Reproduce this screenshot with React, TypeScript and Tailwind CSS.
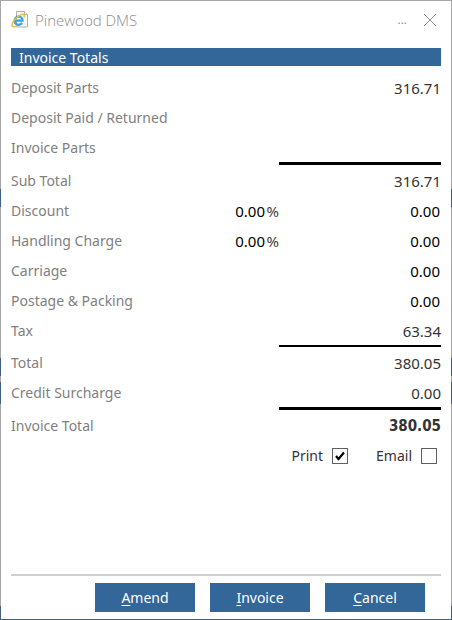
import React, { useState } from 'react'

type Row = {
  id: string;
  label: string;
  value: string;
  percent?: string;
  editable?: boolean;
  bold?: boolean;
  rule?: string;
};

const rows: Row[] = [
  { id: 'deposit-parts', label: 'Deposit Parts', value: '316.71' },
  { id: 'deposit-paid', label: 'Deposit Paid / Returned', value: '' },
  { id: 'invoice-parts', label: 'Invoice Parts', value: '' },
  { id: 'sub-total', label: 'Sub Total', value: '316.71', rule: 'h-[3px]' },
  { id: 'discount', label: 'Discount', value: '0.00', percent: '0.00', editable: true },
  { id: 'handling', label: 'Handling Charge', value: '0.00', percent: '0.00', editable: true },
  { id: 'carriage', label: 'Carriage', value: '0.00', editable: true },
  { id: 'postage', label: 'Postage & Packing', value: '0.00', editable: true },
  { id: 'tax', label: 'Tax', value: '63.34' },
  { id: 'total', label: 'Total', value: '380.05', rule: 'h-[2px]' },
  { id: 'surcharge', label: 'Credit Surcharge', value: '0.00' },
  { id: 'invoice-total', label: 'Invoice Total', value: '380.05', bold: true, rule: 'h-[3px]' },
];

const actions = [
  { key: 'A', rest: 'mend' },
  { key: 'I', rest: 'nvoice' },
  { key: 'C', rest: 'ancel' },
];

const PageIcon = () => (
  <svg viewBox="0 0 18 18" className="size-[18px] shrink-0" aria-hidden="true">
    <path d="M5.5.5h8l3 3v12.500h-11z" fill="#f9f9f9" stroke="#b0b0b0" />
    <path d="M13.500.5v3h3" fill="#fff" stroke="#b0b0b0" />
    <path d="M11.500 9.600H3.600a4 4 0 0 1 8 0zM3.600 9.600a4 4 0 0 0 7.400 2.300" fill="none" stroke="#35a5dc" strokeWidth="2.200" />
    <path d="M2 15.800c-2-1.300-.6-5 2.800-8.300S11.800 2.300 13 3.700c.6.700.4 1.800-.2 3" fill="none" stroke="#f0bd35" strokeWidth="1.500" />
    <path d="M2 15.800c1 .6 2.400 0 3.800-1" fill="none" stroke="#f0bd35" strokeWidth="1.300" />
  </svg>
);

const TotalRow = ({ row }: { row: Row }) => {
  const [value, setValue] = useState(row.value);
  const [percent, setPercent] = useState(row.percent ?? '');

  return (
    <>
      {row.rule && <div className={`ml-auto w-[162px] bg-black ${row.rule}`} />}
      <div className="flex h-[30px] items-center pt-0.5">
        <label htmlFor={row.id} className="flex-1 text-[#808080]">{row.label}</label>
        {row.percent && (
          <div className="flex items-center">
            <input
              aria-label={`${row.label} percent`}
              value={percent}
              onChange={(e) => setPercent(e.target.value)}
              className="w-14 text-right text-[15px] text-black outline-none"
            />
            <span className="w-[14px] text-right text-[15px] text-[#404040]">%</span>
          </div>
        )}
        {row.editable ? (
          <input
            id={row.id}
            value={value}
            onChange={(e) => setValue(e.target.value)}
            className="w-[162px] pr-px text-right text-[15px] text-black outline-none"
          />
        ) : (
          <output
            id={row.id}
            className={`w-[162px] text-right text-[15px] text-[#333333] ${row.bold ? "font-['DejaVu_Sans_Condensed','DejaVu_Sans',sans-serif] font-bold" : ''}`}
          >
            {row.value}
          </output>
        )}
      </div>
    </>
  );
};

const CheckOption = ({ label, initial }: { label: string; initial: boolean }) => {
  const [checked, setChecked] = useState(initial);

  return (
    <label className="flex items-center gap-[9px] text-[#333333]">
      {label}
      <span className="grid">
        <input
          type="checkbox"
          checked={checked}
          onChange={(e) => setChecked(e.target.checked)}
          className="col-start-1 row-start-1 size-4 appearance-none border border-[#606060] bg-white"
        />
        {checked && (
          <svg viewBox="0 0 16 16" className="pointer-events-none col-start-1 row-start-1 size-4" aria-hidden="true">
            <path d="M4 8l2.500 3L12 4.500" fill="none" stroke="#000" strokeWidth="2.200" />
          </svg>
        )}
      </span>
    </label>
  );
};

export default function App() {
  return (
    <div className="flex min-h-screen bg-[linear-gradient(#a6a6a6_189px,#3f5f8a_189px_207px,#a6a6a6_207px_358px,#3f5f8a_358px_376px,#a6a6a6_376px_382px,#3f5f8a_382px_404px,#a6a6a6_404px_606px,#45607c_606px)] p-px font-['Noto_Sans','Open_Sans',sans-serif] text-sm leading-5">
      <main className="flex flex-1 flex-col bg-white px-[10px]">
        <header className="flex h-[47px] items-center pb-[9px] font-['Open_Sans',sans-serif] text-[15px] text-[#8c8c8c]">
          <PageIcon />
          <h1 className="ml-1.5 flex-1 font-light">Pinewood DMS</h1>
          <button type="button" aria-label="More" className="mr-4 text-xs">...</button>
          <button type="button" aria-label="Close" className="mr-1">
            <svg viewBox="0 0 14 14" className="size-[14px]" aria-hidden="true">
              <path d="M1 1l12 12M13 1L1 13" stroke="#8c8c8c" />
            </svg>
          </button>
        </header>
        <h2 className="mb-1.5 h-[18px] bg-[#336699] px-2 leading-5 text-white">Invoice Totals</h2>
        <section>
          {rows.map((row) => (
            <TotalRow key={row.id} row={row} />
          ))}
          <div className="flex h-[30px] items-center justify-end gap-7 pt-0.5 pr-1">
            <CheckOption label="Print" initial={true} />
            <CheckOption label="Email" initial={false} />
          </div>
        </section>
        <footer className="mt-auto flex justify-end gap-[15px] border-t-2 border-[#d0d0d0] pt-[7px] pr-4 pb-[7px]">
          {actions.map((action) => (
            <button
              type="button"
              key={action.key}
              className="h-[29px] w-[100px] bg-[#336699] text-white"
            >
              <span className="underline underline-offset-2">{action.key}</span>
              {action.rest}
            </button>
          ))}
        </footer>
      </main>
    </div>
  )
}
